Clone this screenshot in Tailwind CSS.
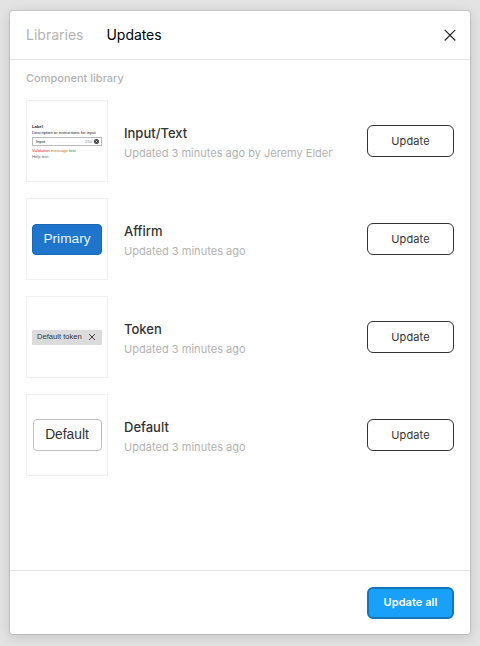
<!DOCTYPE html>
<html lang="en">
<head>
<meta charset="utf-8">
<title>Libraries</title>
<script src="https://cdn.jsdelivr.net/npm/@tailwindcss/browser@4"></script>
</head>
<body class="h-[646px] overflow-hidden bg-[#e3e3e3] pt-[11px] pl-[10px] font-['Inter',sans-serif] antialiased">
<main class="flex h-[623px] w-[460px] flex-col rounded-[3px] bg-white shadow-[0_0_0_1px_rgba(0,0,0,0.1),0_3px_14px_rgba(0,0,0,0.14)]">
  <header class="flex h-[49px] shrink-0 items-center border-b border-[#e5e5e5] px-4 text-[14px] leading-5">
    <span class="w-[80.5px] whitespace-nowrap text-[#b3b3b3]">Libraries</span>
    <span class="whitespace-nowrap tracking-[-0.05px] text-black">Updates</span>
    <svg class="mr-[-4px] ml-auto h-4 w-4" viewBox="0 0 16 16" fill="none" stroke="#222" stroke-width="1.15"><path d="M2.7 2.9 13.3 13.5M13.3 2.9 2.7 13.5"/></svg>
  </header>
  <section class="flex-1 px-4 pt-[10px]">
    <h2 class="text-[11px] leading-4 font-medium text-[#b3b3b3]">Component library</h2>
    <ul class="mt-[14px] flex flex-col gap-4">
      <li class="flex h-[82px] items-center">
        <div class="flex h-[82px] w-[82px] flex-col border border-[#f0f0f0] px-[5px] pt-[23px] font-['Liberation_Sans',sans-serif] text-[4.15px] leading-[6px] whitespace-nowrap text-[#222]">
          <span class="font-bold">Label</span>
          <span>Description or instructions for input</span>
          <span class="mt-px flex h-[9px] w-[70px] items-center border border-[#bbb] pr-[2px] pl-[3px]">Input<span class="ml-auto text-[#888]">250</span><svg class="ml-[2px] h-[5px] w-[5px]" viewBox="0 0 10 10"><circle cx="5" cy="5" r="5" fill="#444"/><path d="M3.3 3.3 6.7 6.7M6.7 3.3 3.3 6.7" stroke="#fff" stroke-width="1.2"/></svg></span>
          <span class="mt-[2px]"><span class="text-[#ee2222]">Validation</span> <span class="text-[#c17d10]">message</span> <span class="text-[#108548]">text</span></span>
          <span class="text-[#666]">Help text</span>
        </div>
        <div class="ml-4 pt-[3px] whitespace-nowrap"><h3 class="text-[13px] leading-5 font-medium text-[#333]">Input/Text</h3><p class="text-[11px] leading-5 text-[#b3b3b3]">Updated 3 minutes ago by Jeremy Elder</p></div>
        <button class="ml-auto h-8 w-[87px] rounded-[6px] border border-[#333] text-[11px] tracking-[0.12px] text-[#333]">Update</button>
      </li>
      <li class="flex h-[82px] items-center">
        <div class="flex h-[82px] w-[82px] items-center justify-center border border-[#f0f0f0] font-['Liberation_Sans',sans-serif]">
          <span class="flex h-[31px] w-[70px] items-center justify-center rounded-[4px] border border-[#1868b8] bg-[#1f75cb] text-[13.7px] text-[#e9f3fc]">Primary</span>
        </div>
        <div class="ml-4 pt-[3px] whitespace-nowrap"><h3 class="text-[13px] leading-5 font-medium text-[#333]">Affirm</h3><p class="text-[11px] leading-5 tracking-[0.03px] text-[#b3b3b3]">Updated 3 minutes ago</p></div>
        <button class="ml-auto h-8 w-[87px] rounded-[6px] border border-[#333] text-[11px] tracking-[0.12px] text-[#333]">Update</button>
      </li>
      <li class="flex h-[82px] items-center">
        <div class="flex h-[82px] w-[82px] items-center justify-center border border-[#f0f0f0] font-['Liberation_Sans',sans-serif]">
          <span class="flex h-[15px] w-[70px] items-center rounded-[1px] bg-[#dbdbdb] pr-[6px] pl-[5px] text-[7.6px] whitespace-nowrap text-[#333]">Default token<svg class="ml-auto h-[8px] w-[8px]" viewBox="0 0 8 8" stroke="#444" stroke-width="1"><path d="M1 1 7 7M7 1 1 7"/></svg></span>
        </div>
        <div class="ml-4 pt-[3px] whitespace-nowrap"><h3 class="text-[13px] leading-5 font-medium text-[#333]">Token</h3><p class="text-[11px] leading-5 tracking-[0.03px] text-[#b3b3b3]">Updated 3 minutes ago</p></div>
        <button class="ml-auto h-8 w-[87px] rounded-[6px] border border-[#333] text-[11px] tracking-[0.12px] text-[#333]">Update</button>
      </li>
      <li class="flex h-[82px] items-center">
        <div class="flex h-[82px] w-[82px] items-center justify-center border border-[#f0f0f0] font-['Liberation_Sans',sans-serif]">
          <span class="flex h-8 w-[69px] items-center justify-center rounded-[4px] border border-[#bfbfbf] text-[13.8px] text-[#333]">Default</span>
        </div>
        <div class="ml-4 pt-[3px] whitespace-nowrap"><h3 class="text-[13px] leading-5 font-medium text-[#333]">Default</h3><p class="text-[11px] leading-5 tracking-[0.03px] text-[#b3b3b3]">Updated 3 minutes ago</p></div>
        <button class="ml-auto h-8 w-[87px] rounded-[6px] border border-[#333] text-[11px] tracking-[0.12px] text-[#333]">Update</button>
      </li>
    </ul>
  </section>
  <footer class="flex h-16 shrink-0 items-center justify-end border-t border-[#e5e5e5] px-4">
    <button class="h-8 w-[87px] rounded-[6px] border-2 border-[#1476b8] bg-[#18a0fb] text-[11px] font-semibold tracking-[0.05px] text-white">Update all</button>
  </footer>
</main>
</body>
</html>
